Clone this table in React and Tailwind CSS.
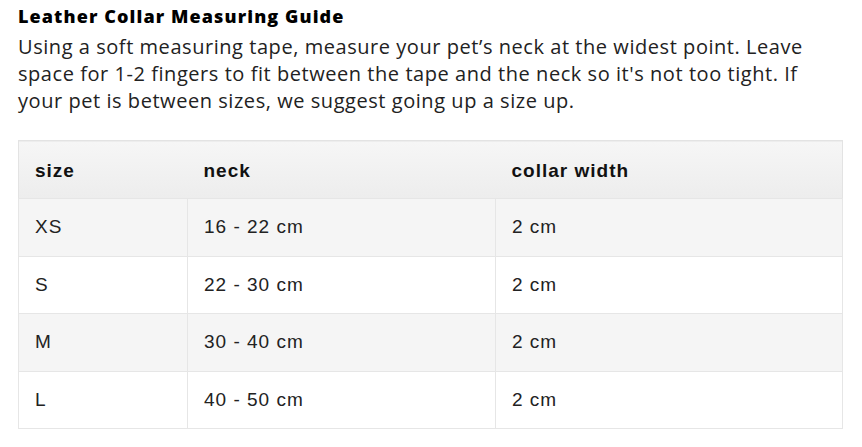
export default function App() {
  const rows = [
    ["XS", "16 - 22 cm", "2 cm"],
    ["S", "22 - 30 cm", "2 cm"],
    ["M", "30 - 40 cm", "2 cm"],
    ["L", "40 - 50 cm", "2 cm"],
  ];
  return (
    <div className="bg-white w-[862px] h-[447px] px-[18px] pt-[4px]" >
      <h2 className="font-['Open_Sans',sans-serif] font-extrabold text-[18px] leading-[24px] tracking-[1.1px] text-black">
        Leather Collar Measuring Guide
      </h2>
      <p className="font-['Open_Sans',sans-serif] text-[20px] leading-[27px] tracking-[0.55px] text-[#222] mt-[5px] w-[826px]">
        Using a soft measuring tape, measure your pet’s neck at the widest point. Leave space for 1-2 fingers to fit between the tape and the neck so it's not too tight. If your pet is between sizes, we suggest going up a size up.
      </p>
      <table className="mt-[26px] w-[824px] table-fixed border-collapse font-['Liberation_Sans',Arial,sans-serif] text-[19px] tracking-[1px] text-[#222]">
        <colgroup>
          <col className="w-[169px]" />
          <col className="w-[308px]" />
          <col className="w-[347px]" />
        </colgroup>
        <thead>
          <tr className="h-[58px] bg-gradient-to-b from-[#f6f6f6] to-[#ededed] border border-[#e3e3e3]">
            <th className="text-left font-bold px-4 pt-[3px] text-[#111]">size</th>
            <th className="text-left font-bold px-4 pt-[3px] text-[#111]">neck</th>
            <th className="text-left font-bold px-4 pt-[3px] text-[#111]">collar width</th>
          </tr>
        </thead>
        <tbody>
          {rows.map((r, i) => (
            <tr key={i} className={`h-[57.5px] ${i % 2 === 0 ? "bg-[#f5f5f5]" : "bg-white"}`}>
              {r.map((c, j) => (
                <td key={j} className="px-4 border border-[#e6e6e6]">
                  {c}
                </td>
              ))}
            </tr>
          ))}
        </tbody>
      </table>
    </div>
  );
}
